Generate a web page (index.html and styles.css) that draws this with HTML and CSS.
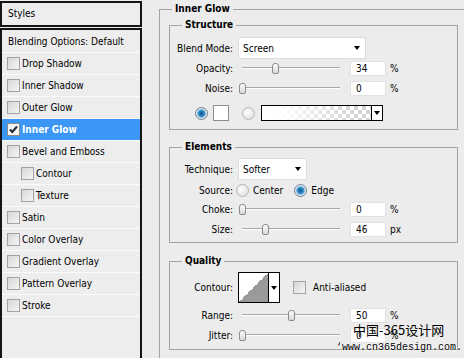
FILE: index.html
```html
<!DOCTYPE html>
<html lang="en">
<head>
  <meta charset="UTF-8">
  <title>Layer Style - Inner Glow</title>
  <link rel="stylesheet" href="styles.css">
</head>
<body>

  <div id="stylesPanel">
    <div class="styles-head">Styles</div>
    <ul class="style-list">
      <li class="style-item plain">Blending Options: Default</li>
      <li class="style-item"><span class="check"></span>Drop Shadow</li>
      <li class="style-item"><span class="check"></span>Inner Shadow</li>
      <li class="style-item"><span class="check"></span>Outer Glow</li>
      <li class="style-item active">
        <span class="check on">
          <svg width="11" height="11" viewBox="0 0 11 11"><path d="M2 5.5 L4.3 8 L9 2.5" fill="none" stroke="#1b2a3a" stroke-width="2"/></svg>
        </span>Inner Glow
      </li>
      <li class="style-item"><span class="check"></span>Bevel and Emboss</li>
      <li class="style-item sub"><span class="check"></span>Contour</li>
      <li class="style-item sub"><span class="check"></span>Texture</li>
      <li class="style-item"><span class="check"></span>Satin</li>
      <li class="style-item"><span class="check"></span>Color Overlay</li>
      <li class="style-item"><span class="check"></span>Gradient Overlay</li>
      <li class="style-item"><span class="check"></span>Pattern Overlay</li>
      <li class="style-item"><span class="check"></span>Stroke</li>
    </ul>
  </div>

  <div id="options">
    <fieldset class="group outer">
      <legend>Inner Glow</legend>

      <fieldset class="group structure">
        <legend>Structure</legend>
        <div class="row">
          <span class="lbl">Blend Mode:</span>
          <div class="select blend">Screen<span class="arrow"></span></div>
        </div>
        <div class="row gap2">
          <span class="lbl">Opacity:</span>
          <div class="slider"><div class="track"></div><div class="thumb" style="left: 34%"></div></div>
          <div class="num">34</div><span class="unit">%</span>
        </div>
        <div class="row gap5">
          <span class="lbl">Noise:</span>
          <div class="slider"><div class="track"></div><div class="thumb" style="left: 0%"></div></div>
          <div class="num">0</div><span class="unit">%</span>
        </div>
        <div class="row colors">
          <span class="radio on"></span>
          <span class="swatch"></span>
          <span class="radio off"></span>
          <div class="gradient"><div class="fill"></div><div class="drop"><span class="arrow"></span></div></div>
        </div>
      </fieldset>

      <fieldset class="group elements">
        <legend>Elements</legend>
        <div class="row">
          <span class="lbl">Technique:</span>
          <div class="select technique">Softer<span class="arrow"></span></div>
        </div>
        <div class="row gap4">
          <span class="lbl">Source:</span>
          <span class="radio off first"></span><span class="opt">Center</span>
          <span class="radio on second"></span><span class="opt">Edge</span>
        </div>
        <div class="row gap5">
          <span class="lbl">Choke:</span>
          <div class="slider"><div class="track"></div><div class="thumb" style="left: 0%"></div></div>
          <div class="num">0</div><span class="unit">%</span>
        </div>
        <div class="row gap5">
          <span class="lbl">Size:</span>
          <div class="slider"><div class="track"></div><div class="thumb" style="left: 23%"></div></div>
          <div class="num">46</div><span class="unit">px</span>
        </div>
      </fieldset>

      <fieldset class="group quality">
        <legend>Quality</legend>
        <div class="row">
          <span class="lbl">Contour:</span>
          <div class="contour"><div class="curve"></div><div class="drop"><span class="arrow"></span></div></div>
          <span class="check aa"></span><span class="opt">Anti-aliased</span>
        </div>
        <div class="row gap5">
          <span class="lbl">Range:</span>
          <div class="slider"><div class="track"></div><div class="thumb" style="left: 50%"></div></div>
          <div class="num">50</div><span class="unit">%</span>
        </div>
        <div class="row gap5">
          <span class="lbl">Jitter:</span>
          <div class="slider"><div class="track"></div><div class="thumb" style="left: 0%"></div></div>
          <div class="num">0</div><span class="unit">%</span>
        </div>
      </fieldset>
    </fieldset>
  </div>

  <div class="watermark">
    <div class="wm-cn">中国-365设计网</div>
    <div class="wm-url">‘www.cn365design.com.</div>
  </div>

</body>
</html>
```

FILE: styles.css
```css
* { margin: 0; padding: 0; box-sizing: border-box; }
html, body {
  width: 100%;
  height: 100%;
}
body {
  background-color: #ececec;
  font-family: "DejaVu Sans Condensed", "Liberation Sans", sans-serif;
  font-size: 10px;
  color: #000;
  overflow: hidden;
  display: flex;
  position: relative;
}

/* left styles list */
#stylesPanel {
  width: 142px;
  flex-shrink: 0;
  padding-top: 1px;
  display: flex;
  flex-direction: column;
  gap: 1px;
}
.styles-head {
  height: 26px;
  border: 2px solid #151515;
  padding-left: 6px;
  line-height: 22px;
  background-color: #ededed;
}
.style-list {
  flex: 1;
  list-style: none;
  border: 2px solid #151515;
  border-bottom: none;
  background-color: #ededed;
}
.style-item {
  height: 22px;
  border-bottom: 1px solid #fbfbfb;
  display: flex;
  align-items: center;
  gap: 2px;
  padding-left: 5px;
  white-space: nowrap;
}
.style-item.plain {
  height: 23px;
  padding-left: 6px;
}
.style-item.sub { padding-left: 19px; }
.style-item.active {
  background-color: #3a97f5;
  color: white;
  font-weight: bold;
}

.check {
  width: 13px;
  height: 13px;
  flex-shrink: 0;
  border: 1px solid #a2a2a2;
  background: linear-gradient(135deg, #d6d6d6, #f6f6f6);
}
.check.on {
  background: #f4f4f4;
  border-color: #8a8a8a;
  display: flex;
  align-items: center;
  justify-content: center;
}
.check.aa { margin-left: 13px; margin-right: 3px; }

/* right options */
#options {
  flex: 1;
  padding: 3px 0 0 17px;
}
.group {
  border: 1px solid #a3a3a3;
  margin: 0 0 0 9px;
  width: 289px;
  min-width: 0;
}
.group legend {
  margin-left: 12px;
  padding: 0 3px;
  font-weight: bold;
  line-height: 12px;
}
.outer {
  margin: 0;
  width: 340px;
  border-right: none;
  border-bottom: none;
  padding-bottom: 30px;
}
.structure { margin-top: 4px; padding: 6px 0 8px; }
.elements { margin-top: 11px; padding: 5px 0 5px; }
.quality { margin-top: 12px; padding: 5px 0 6px; }

.row {
  display: flex;
  align-items: center;
  white-space: nowrap;
}
.gap2 { margin-top: 2px; }
.gap4 { margin-top: 4px; }
.gap5 { margin-top: 5px; }
.lbl {
  width: 63px;
  margin-right: 5px;
  text-align: right;
}

.select {
  height: 22px;
  background-color: white;
  border: 1px solid #dcdcdc;
  display: flex;
  align-items: center;
  justify-content: space-between;
  padding: 0 5px 0 4px;
}
.select.blend { width: 128px; }
.select.technique { width: 69px; }
.arrow {
  width: 0;
  height: 0;
  border-left: 3.5px solid transparent;
  border-right: 3.5px solid transparent;
  border-top: 4px solid #000;
}

.slider {
  width: 98px;
  height: 11px;
  margin-left: 4px;
  position: relative;
}
.track {
  margin-top: 4px;
  height: 2px;
  border-top: 1px solid #a8a8a8;
  border-bottom: 1px solid #fdfdfd;
}
.thumb {
  position: absolute;
  top: 0;
  width: 7px;
  height: 11px;
  margin-left: -3px;
  border: 1px solid #8c8c8c;
  border-radius: 3px 3px 2px 2px;
  background: linear-gradient(#fdfdfd, #d9d9d9);
}
.num {
  width: 36px;
  height: 15px;
  margin-left: 10px;
  background-color: white;
  border: 1px solid #e2e2e2;
  padding-left: 5px;
  line-height: 13px;
}
.unit { margin-left: 4px; }

.radio {
  width: 13px;
  height: 13px;
  border-radius: 50%;
  flex-shrink: 0;
}
.radio.on {
  border: 1px solid #6d7f92;
  background: radial-gradient(circle, #0f4f80 0, #2a86c4 2.5px, #4aa0d6 3.5px, #c9d6e2 4.5px, #f2f2f2 5.5px);
}
.radio.off {
  border: 1px solid #b4b4b4;
  background: radial-gradient(circle at 40% 40%, #fdfdfd, #dadada);
}
.colors { margin-top: 9px; padding-left: 25px; height: 16px; }
.swatch {
  width: 16px;
  height: 16px;
  margin-left: 5px;
  background-color: white;
  border: 1px solid #8d8d8d;
}
.colors .radio.off { margin-left: 13px; }
.gradient {
  width: 122px;
  height: 16px;
  margin-left: 6px;
  border: 1px solid #000;
  display: flex;
}
.gradient .fill {
  flex: 1;
  background:
    linear-gradient(to right, #fff 15%, rgba(255, 255, 255, 0.1) 85%),
    repeating-conic-gradient(#cfcfcf 0 25%, #fff 0 50%) 0 0 / 8px 8px;
}
.drop {
  width: 11px;
  border-left: 1px solid #000;
  background-color: white;
  display: flex;
  align-items: center;
  justify-content: center;
}

.radio.first { margin-left: -2px; }
.radio.second { margin-left: 11px; }
.opt { margin-left: 4px; }

.contour {
  width: 42px;
  height: 31px;
  border: 1px solid #000;
  display: flex;
}
.contour .curve {
  flex: 1;
  background: linear-gradient(to top left, #9a9a9a 50%, #fff 50%);
}

/* watermark over the corner */
.watermark {
  position: absolute;
  left: 336px;
  top: 323px;
  width: 126px;
  line-height: 1;
}
.wm-cn {
  margin-left: 17px;
  font-family: "Noto Sans CJK SC", sans-serif;
  font-size: 13px;
  white-space: nowrap;
}
.wm-url {
  margin-top: 7px;
  font-family: "Liberation Mono", monospace;
  font-size: 10px;
  white-space: nowrap;
  text-shadow: 0 0 2px #fff, 0 0 2px #fff;
}
```
